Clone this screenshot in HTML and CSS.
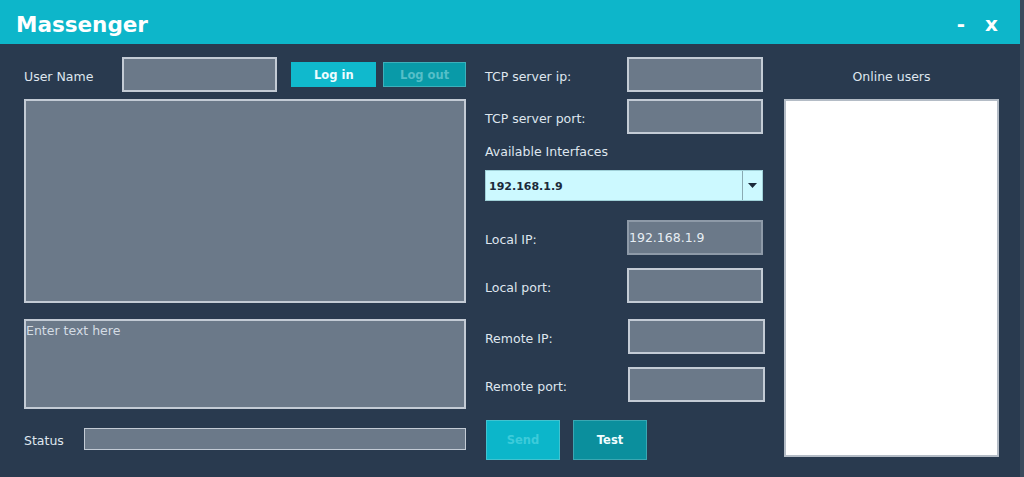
FILE: index.html
```html
<!DOCTYPE html>
<html>
<head>
<meta charset="utf-8">
<link rel="stylesheet" href="styles.css">
</head>
<body>
<div class="window">
  <header class="titlebar">
    <span class="title">Massenger</span>
    <span class="controls"><span class="min">-</span><span class="close">x</span></span>
  </header>
  <main class="content">
    <section class="col-left">
      <div class="user-row">
        <span class="label user-label">User Name</span>
        <div class="field user-field"></div>
        <button class="btn login">Log in</button>
        <button class="btn logout">Log out</button>
      </div>
      <div class="field chat"></div>
      <div class="field compose">Enter text here</div>
      <div class="status-row">
        <span class="label status-label">Status</span>
        <div class="field status-field"></div>
      </div>
    </section>
    <section class="col-mid">
      <div class="form-row r1"><span class="label">TCP server ip:</span><div class="field small"></div></div>
      <div class="form-row r2"><span class="label">TCP server port:</span><div class="field small"></div></div>
      <div class="label avail">Available Interfaces</div>
      <div class="combo"><span class="combo-text">192.168.1.9</span><span class="combo-btn"><svg width="9" height="5" viewBox="0 0 9 5"><path d="M0 0H9L4.5 5Z" fill="#1c2a3a"/></svg></span></div>
      <div class="form-row r3"><span class="label">Local IP:</span><div class="field small ipval">192.168.1.9</div></div>
      <div class="form-row r4"><span class="label">Local port:</span><div class="field small"></div></div>
      <div class="form-row r5"><span class="label">Remote IP:</span><div class="field small wide"></div></div>
      <div class="form-row r6"><span class="label">Remote port:</span><div class="field small wide"></div></div>
      <div class="btn-row">
        <button class="btn send">Send</button>
        <button class="btn test">Test</button>
      </div>
    </section>
    <section class="col-right">
      <div class="label online">Online users</div>
      <div class="userlist"></div>
    </section>
  </main>
</div>
</body>
</html>
```

FILE: styles.css
```css
* { box-sizing: border-box; }
html, body { margin: 0; padding: 0; }
body {
  width: 1024px;
  height: 477px;
  overflow: hidden;
  background: #293a4f;
  font-family: "DejaVu Sans", Verdana, sans-serif;
}
.window {
  width: 1024px;
  height: 477px;
  background: #293a4f;
  border-right: 4px solid #3a4a5c;
}
.titlebar {
  height: 44px;
  background: #0db6ca;
  display: flex;
  align-items: center;
  justify-content: space-between;
  padding: 0 22px 0 16px;
  color: #fff;
}
.title {
  font-weight: bold;
  font-size: 21.5px;
  margin-top: 4px;
}
.controls {
  display: flex;
  gap: 20px;
  font-weight: bold;
  font-size: 20px;
  margin-top: 4px;
}
.content {
  display: flex;
  padding-left: 24px;
}
.label {
  color: #dfe6ee;
  font-size: 12.5px;
}
.user-row .label, .form-row .label, .status-row .label {
  padding-top: 3px;
}
.field {
  background: #6b7989;
  border: 2px solid #c3cbd5;
}
.col-left {
  width: 442px;
  display: flex;
  flex-direction: column;
}
.user-row {
  display: flex;
  align-items: center;
  height: 35px;
  margin-top: 13px;
}
.user-label { width: 98px; }
.user-field { width: 156px; height: 35px; }
.btn {
  border: none;
  font-family: "DejaVu Sans", Verdana, sans-serif;
  font-weight: bold;
  font-size: 11.5px;
  padding: 0;
  cursor: default;
}
.login {
  margin-left: 14px;
  width: 85px;
  height: 25px;
  background: #10b9cd;
  color: #eefcff;
}
.logout {
  margin-left: 7px;
  width: 83px;
  height: 25px;
  background: #099aa8;
  border: 1px solid #3cb0bb;
  color: #55bfc8;
}
.chat {
  margin-top: 7px;
  height: 204px;
}
.compose {
  margin-top: 16px;
  height: 90px;
  color: #d4dce4;
  font-size: 12.5px;
  padding: 2px 0 0 0;
}
.status-row {
  display: flex;
  align-items: center;
  margin-top: 19px;
  height: 22px;
}
.status-label { width: 60px; }
.status-field { flex: 1; height: 22px; border-width: 1px; }

.col-mid {
  width: 281px;
  margin-left: 19px;
  display: flex;
  flex-direction: column;
}
.form-row {
  display: flex;
  align-items: center;
  justify-content: space-between;
  width: 278px;
}
.form-row .label { flex: none; }
.small { width: 136px; height: 35px; }
.wide { width: 137px; }
.r1 { margin-top: 13px; }
.r2 { margin-top: 7px; }
.avail { margin-top: 10px; height: 16px; }
.combo {
  margin-top: 10px;
  width: 278px;
  height: 31px;
  background: #ccf9ff;
  border: 1px solid #9fd0d8;
  display: flex;
  align-items: center;
}
.combo-text {
  flex: 1;
  padding-left: 3px;
  padding-top: 2px;
  font-size: 11px;
  font-weight: bold;
  color: #1c2a3a;
}
.combo-btn {
  width: 20px;
  height: 100%;
  border-left: 1px solid #8aaab2;
  display: flex;
  align-items: center;
  justify-content: center;
}
.r3 { margin-top: 19px; }
.ipval {
  color: #e6edf3;
  font-size: 12.5px;
  display: flex;
  align-items: center;
  border-color: #8e9aa8;
}
.r4 { margin-top: 13px; }
.r5 { margin-top: 16px; width: 280px; }
.r6 { margin-top: 13px; width: 280px; }
.btn-row {
  display: flex;
  gap: 13px;
  margin-top: 18px;
  padding-left: 1px;
}
.send, .test {
  width: 74px;
  height: 40px;
  font-size: 11.5px;
}
.send {
  background: #0cb6ca;
  color: #3ccbda;
  border: 1px solid #41c3d0;
}
.test {
  background: #0b8f9d;
  color: #f2fdff;
  border: 1px solid #3aa7b2;
}

.col-right {
  width: 215px;
  margin-left: 18px;
  display: flex;
  flex-direction: column;
}
.online {
  text-align: center;
  margin-top: 25px;
  height: 16px;
}
.userlist {
  margin-top: 14px;
  height: 358px;
  background: #ffffff;
  border: 2px solid #b4bcc6;
}
```
